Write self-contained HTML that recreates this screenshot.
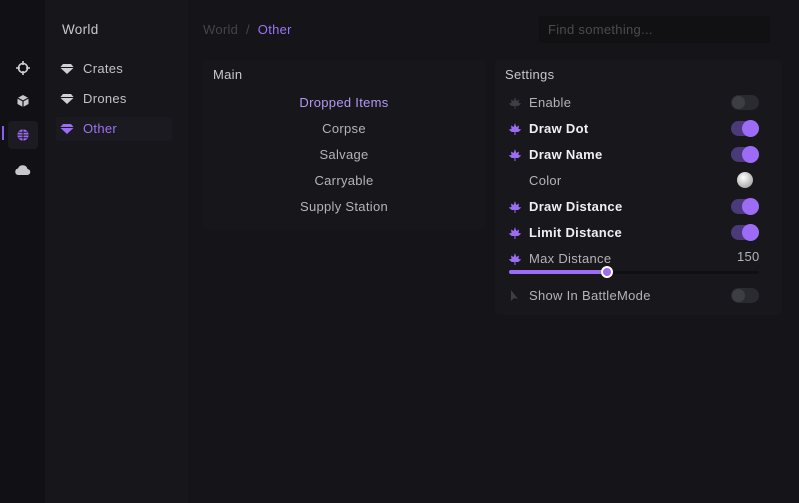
<!DOCTYPE html>
<html><head><style>
*{margin:0;padding:0;box-sizing:border-box}
body{width:799px;height:503px;background:#141419;font-family:"Liberation Sans",sans-serif;font-size:13px;color:#c8c8cc;position:relative;overflow:hidden;letter-spacing:0.3px}
.a{position:absolute}
.side1{left:0;top:0;width:45px;height:503px;background:#111115}
.side2{left:45px;top:0;width:143px;height:503px;background:#16161b}
.nav{left:83px;font-size:13px;color:#c2c2c6}
.panel{background:#17171c;border-radius:4px}
.sw{width:28px;height:15px;border-radius:8px;background:#2a2a30}
.sw i{position:absolute;left:1px;top:1px;width:13px;height:13px;border-radius:50%;background:#3d3d44}
.sw.on{background:#4a3a7a}
.sw.on i{left:auto;right:0;top:-1px;width:17px;height:17px;background:#9c6cf7}
.lbl{left:529px;font-size:13px}
.leaf{left:508px;width:14px;height:14px}
.mi{left:203px;width:282px;text-align:center;color:#b4b4b8}
</style></head><body>
<div class="a side1"></div>
<div class="a side2"></div>
<div class="a" style="left:2px;top:126px;width:2px;height:14px;background:#8b5cf6"></div>
<div class="a" style="left:8px;top:121px;width:30px;height:28px;background:#1b1b21;border-radius:4px"></div>
<svg class="a" style="left:15px;top:60px" width="16" height="16" viewBox="0 0 16 16" fill="none" stroke="#d0d0d4" stroke-width="1.6"><circle cx="8" cy="8" r="4.5"/><path d="M8 1v4M8 11v4M1 8h4M11 8h4"/></svg>
<svg class="a" style="left:16px;top:94px" width="14" height="14" viewBox="0 0 14 14"><path d="M7 1l5.5 3v6L7 13 1.5 10V4z" fill="#c8c8cc"/><path d="M1.5 4L7 7l5.5-3M7 7v6" stroke="#111115" stroke-width="1.2" fill="none"/></svg>
<svg class="a" style="left:16px;top:128px" width="14" height="14" viewBox="0 0 14 14" fill="none"><circle cx="7" cy="7" r="5.6" fill="#9c6cf7"/><path d="M1.5 7h11M7 1.5v11M2.5 4.2h9M2.5 9.8h9" stroke="#1b1b21" stroke-width="1"/></svg>
<svg class="a" style="left:14px;top:163px" width="17" height="13" viewBox="0 0 17 13"><path d="M4 12h9a3 3 0 0 0 .5-6A5 5 0 0 0 4 5.5 3.3 3.3 0 0 0 4 12z" fill="#c8c8cc"/></svg>
<div class="a" style="left:62px;top:22px;font-size:13.5px;color:#c8c8cc">World</div>
<svg class="a" style="left:60px;top:63px" width="14" height="12" viewBox="0 0 14 12"><path d="M3 1h8l3 3.5L7 11 0 4.5z" fill="#d0d0d4"/><path d="M0 4.5h14" stroke="#16161b"/></svg>
<div class="a nav" style="top:61px">Crates</div>
<svg class="a" style="left:60px;top:93px" width="14" height="12" viewBox="0 0 14 12"><path d="M3 1h8l3 3.5L7 11 0 4.5z" fill="#d0d0d4"/><path d="M0 4.5h14" stroke="#16161b"/></svg>
<div class="a nav" style="top:91px">Drones</div>
<div class="a" style="left:56px;top:117px;width:116px;height:24px;background:#1a1a20;border-radius:3px"></div>
<svg class="a" style="left:60px;top:123px" width="14" height="12" viewBox="0 0 14 12"><path d="M3 1h8l3 3.5L7 11 0 4.5z" fill="#9c6cf7"/><path d="M0 4.5h14" stroke="#1a1a20"/></svg>
<div class="a nav" style="top:121px;color:#9c74f5">Other</div>
<div class="a" style="left:203px;top:22px;color:#44444a">World &nbsp;/&nbsp; <span style="color:#9c74f5">Other</span></div>
<div class="a" style="left:539px;top:16px;width:231px;height:27px;background:#111114;border-radius:3px;color:#4a4a50;padding:6px 9px">Find something...</div>
<div class="a panel" style="left:203px;top:60px;width:282px;height:170px;background:#16161b"></div>
<div class="a" style="left:213px;top:67px;color:#c8c8cc">Main</div>
<div class="a mi" style="top:95px;color:#b597f5">Dropped Items</div>
<div class="a mi" style="top:121px">Corpse</div>
<div class="a mi" style="top:147px">Salvage</div>
<div class="a mi" style="top:173px">Carryable</div>
<div class="a mi" style="top:199px">Supply Station</div>
<div class="a panel" style="left:495px;top:60px;width:287px;height:255px"></div>
<div class="a" style="left:505px;top:67px;color:#c8c8cc">Settings</div>

<svg width="0" height="0" style="position:absolute"><defs><path id="lf" d="M7 1l1.3 4 2.7-1.5-.5 3.5 2.8.5-3 2.5H3.7l-3-2.5 2.8-.5-.5-3.5 2.7 1.5z M6.5 10h1v3h-1z"/></defs></svg>
<svg class="a leaf" style="top:96px"><use href="#lf" fill="#3e3e44"/></svg>
<div class="a lbl" style="top:95px;color:#b4b4b8">Enable</div>
<div class="a sw" style="left:731px;top:95px"><i></i></div>

<svg class="a leaf" style="top:122px"><use href="#lf" fill="#9c6cf7"/></svg>
<div class="a lbl" style="top:121px;color:#f0f0f2;font-weight:bold">Draw Dot</div>
<div class="a sw on" style="left:731px;top:121px"><i></i></div>

<svg class="a leaf" style="top:148px"><use href="#lf" fill="#9c6cf7"/></svg>
<div class="a lbl" style="top:147px;color:#f0f0f2;font-weight:bold">Draw Name</div>
<div class="a sw on" style="left:731px;top:147px"><i></i></div>

<div class="a lbl" style="top:173px;color:#b4b4b8">Color</div>
<div class="a" style="left:737px;top:172px;width:16px;height:16px;border-radius:50%;background:radial-gradient(circle at 40% 35%,#fff,#bbb 60%,#888)"></div>

<svg class="a leaf" style="top:200px"><use href="#lf" fill="#9c6cf7"/></svg>
<div class="a lbl" style="top:199px;color:#f0f0f2;font-weight:bold">Draw Distance</div>
<div class="a sw on" style="left:731px;top:199px"><i></i></div>

<svg class="a leaf" style="top:226px"><use href="#lf" fill="#9c6cf7"/></svg>
<div class="a lbl" style="top:225px;color:#f0f0f2;font-weight:bold">Limit Distance</div>
<div class="a sw on" style="left:731px;top:225px"><i></i></div>

<svg class="a leaf" style="top:252px"><use href="#lf" fill="#9c6cf7"/></svg>
<div class="a lbl" style="top:251px;color:#b4b4b8">Max Distance</div>
<div class="a" style="left:737px;top:249px;color:#b4b4b8">150</div>
<div class="a" style="left:509px;top:271px;width:250px;height:3px;background:#101013;border-radius:2px"></div>
<div class="a" style="left:509px;top:270px;width:98px;height:4px;background:#9c6cf7;border-radius:2px"></div>
<div class="a" style="left:601px;top:266px;width:12px;height:12px;border-radius:50%;background:#9c6cf7;border:2px solid #fff"></div>

<svg class="a" style="left:509px;top:289px" width="12" height="14" viewBox="0 0 12 14"><path d="M2 1v11l3-3 4 1z" fill="#3e3e44"/></svg>
<div class="a lbl" style="top:288px;color:#b4b4b8">Show In BattleMode</div>
<div class="a sw" style="left:731px;top:288px"><i></i></div>
</body></html>
